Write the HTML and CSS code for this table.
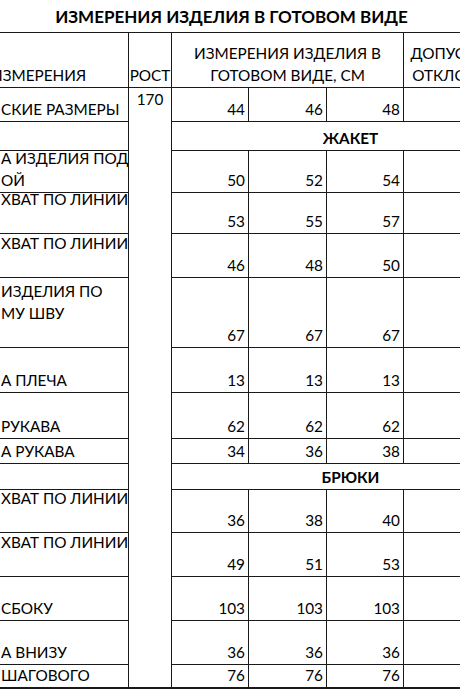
FILE: index.html
```html
<!DOCTYPE html>
<html lang="ru">
<head>
<meta charset="utf-8">
<title>Измерения изделия в готовом виде</title>
<link rel="stylesheet" href="styles.css">
</head>
<body>
<div class="sheet">
  <h1 class="title">ИЗМЕРЕНИЯ ИЗДЕЛИЯ В ГОТОВОМ ВИДЕ</h1>
  <div class="grid">
    <div class="cell lbl hdr-lbl">ИЗМЕРЕНИЯ</div>
    <div class="cell ctr rost-h">РОСТ</div>
    <div class="cell ctr meas-h">ИЗМЕРЕНИЯ ИЗДЕЛИЯ В<br>ГОТОВОМ ВИДЕ, СМ</div>
    <div class="cell ctr tol-h">ДОПУСТИМЫЕ<br>ОТКЛОНЕНИЯ</div>

    <div class="cell lbl">СКИЕ РАЗМЕРЫ</div>
    <div class="cell rost">170</div>
    <div class="cell num">44</div><div class="cell num">46</div><div class="cell num">48</div><div class="cell"></div>

    <div class="cell"></div>
    <div class="cell section">ЖАКЕТ</div>

    <div class="cell lbl">А ИЗДЕЛИЯ ПОД<br>ОЙ</div>
    <div class="cell num">50</div><div class="cell num">52</div><div class="cell num">54</div><div class="cell"></div>

    <div class="cell lbl up1">ХВАТ ПО ЛИНИИ</div>
    <div class="cell num">53</div><div class="cell num">55</div><div class="cell num">57</div><div class="cell"></div>

    <div class="cell lbl up1">ХВАТ ПО ЛИНИИ</div>
    <div class="cell num">46</div><div class="cell num">48</div><div class="cell num">50</div><div class="cell"></div>

    <div class="cell lbl up1">ИЗДЕЛИЯ ПО<br>МУ ШВУ</div>
    <div class="cell num">67</div><div class="cell num">67</div><div class="cell num">67</div><div class="cell"></div>

    <div class="cell lbl">А ПЛЕЧА</div>
    <div class="cell num">13</div><div class="cell num">13</div><div class="cell num">13</div><div class="cell"></div>

    <div class="cell lbl">РУКАВА</div>
    <div class="cell num">62</div><div class="cell num">62</div><div class="cell num">62</div><div class="cell"></div>

    <div class="cell lbl">А РУКАВА</div>
    <div class="cell num">34</div><div class="cell num">36</div><div class="cell num">38</div><div class="cell"></div>

    <div class="cell"></div>
    <div class="cell section">БРЮКИ</div>

    <div class="cell lbl up1">ХВАТ ПО ЛИНИИ</div>
    <div class="cell num">36</div><div class="cell num">38</div><div class="cell num">40</div><div class="cell"></div>

    <div class="cell lbl up1">ХВАТ ПО ЛИНИИ</div>
    <div class="cell num">49</div><div class="cell num">51</div><div class="cell num">53</div><div class="cell"></div>

    <div class="cell lbl">СБОКУ</div>
    <div class="cell num">103</div><div class="cell num">103</div><div class="cell num">103</div><div class="cell"></div>

    <div class="cell lbl">А ВНИЗУ</div>
    <div class="cell num">36</div><div class="cell num">36</div><div class="cell num">36</div><div class="cell"></div>

    <div class="cell lbl">ШАГОВОГО</div>
    <div class="cell num">76</div><div class="cell num">76</div><div class="cell num">76</div><div class="cell"></div>
  </div>
</div>
</body>
</html>
```
FILE: styles.css
```css
html, body {
  margin: 0;
  padding: 0;
  background: #fff;
  overflow: hidden;
}

body {
  width: 460px;
  height: 690px;
  font-family: Lato, "Open Sans", "DejaVu Sans", sans-serif;
  color: #000;
}

.sheet {
  width: 530px;
}

.title {
  margin: 0;
  width: 460px;
  height: 32px;
  box-sizing: border-box;
  padding: 6px 0 0 3px;
  font-size: 17px;
  line-height: 22px;
  font-weight: 700;
  text-align: center;
  white-space: nowrap;
}

.grid {
  display: grid;
  grid-template-columns: 128px 42px 76px 77px 76px 125px;
  grid-template-rows: 54px 33px 28px 41px 40px 43px 69px 44px 45px 24px 25px 42px 43px 43px 43px 22px;
  gap: 1px;
  padding: 1px 1px 2px 0;
  background: #1a1a1a;
  width: max-content;
}

.cell {
  background: #fff;
  font-size: 15.3px;
  line-height: 22.2px;
  white-space: nowrap;
  overflow: hidden;
  display: flex;
  flex-direction: column;
  justify-content: flex-end;
  padding-bottom: 1px;
  box-sizing: border-box;
}

.lbl {
  padding-left: 1px;
  align-items: flex-start;
}

.up1 {
  padding-bottom: 23px;
}

.hdr-lbl {
  text-indent: -10px;
}

.ctr {
  text-align: center;
  align-items: center;
}

.meas-h {
  grid-column: 3 / 6;
}

.rost {
  grid-column: 2;
  grid-row: 2 / 17;
  justify-content: flex-start;
  align-items: center;
  padding-top: 0;
}

.num {
  align-items: flex-end;
  padding-right: 3px;
}

.section {
  grid-column: 3 / 7;
  align-items: center;
  font-weight: 700;
}
```
